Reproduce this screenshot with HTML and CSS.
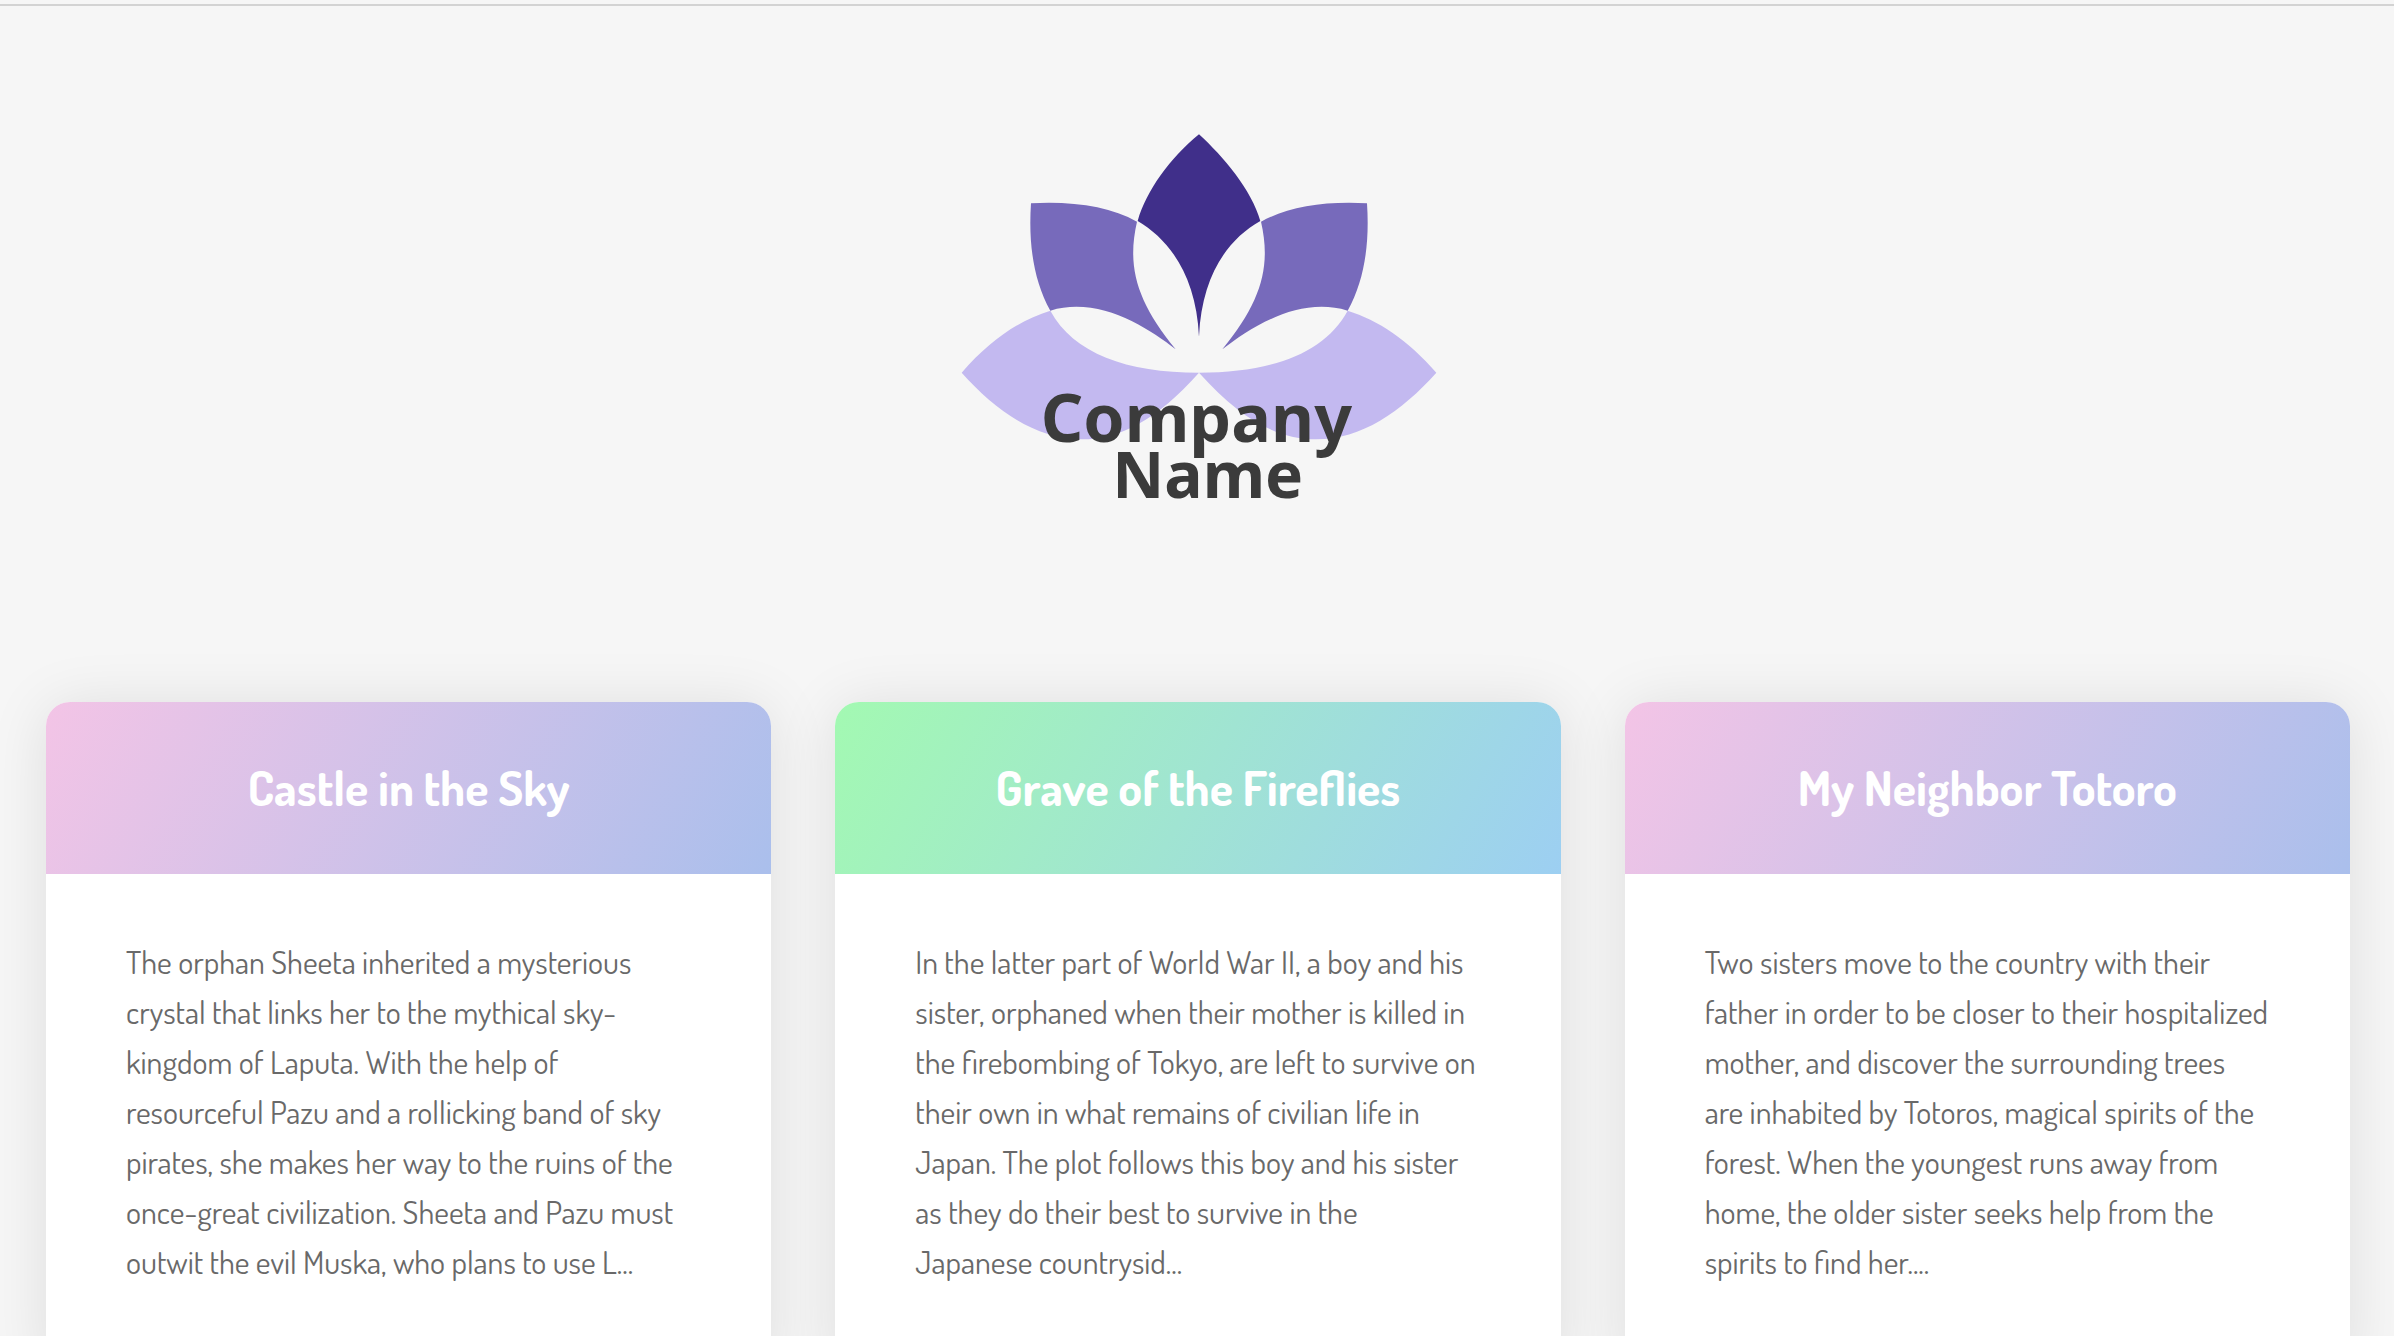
FILE: index.html
```html
<!DOCTYPE html>
<html lang="en">
<head>
<meta charset="utf-8">
<meta name="viewport" content="width=device-width, initial-scale=1">
<title>Ghibli Films</title>
<link rel="stylesheet" href="styles.css">
</head>
<body>
<header class="masthead">
  <svg class="logo" viewBox="-9 0 1560 1230" role="img" aria-label="Company Name">
    <defs>
      <g id="side">
        <path fill="#c3b9f0" d="M65 788C150 690 240 630 331 602C400 730 560 788 777 788C650 930 540 988 425 988C290 988 170 905 65 788Z"/>
        <path fill="#776abb" d="M273 280C400 273 510 290 591 335C560 470 590 575 707 718C620 650 475 558 331 602C280 510 265 400 273 280Z"/>
      </g>
    </defs>
    <use href="#side"/>
    <use href="#side" transform="translate(1554 0) scale(-1 1)"/>
    <path fill="#402f8a" d="M777 73C850 140 935 240 961 333C860 390 785 500 777 680C769 500 690 390 593 333C620 240 690 145 777 73Z"/>
    <text class="logo-text logo-text-large" x="302" y="995">Company</text>
    <text class="logo-text" x="517" y="1165">Name</text>
  </svg>
</header>
<main class="cards">
  <article class="card">
    <h1 class="card-title">Castle in the Sky</h1>
    <p class="card-text">The orphan Sheeta inherited a mysterious crystal that links her to the mythical sky-kingdom of Laputa. With the help of resourceful Pazu and a rollicking band of sky pirates, she makes her way to the ruins of the once-great civilization. Sheeta and Pazu must outwit the evil Muska, who plans to use L...</p>
  </article>
  <article class="card">
    <h1 class="card-title card-title-green">Grave of the Fireflies</h1>
    <p class="card-text">In the latter part of World War II, a boy and his sister, orphaned when their mother is killed in the firebombing of Tokyo, are left to survive on their own in what remains of civilian life in Japan. The plot follows this boy and his sister as they do their best to survive in the Japanese countrysid...</p>
  </article>
  <article class="card">
    <h1 class="card-title">My Neighbor Totoro</h1>
    <p class="card-text">Two sisters move to the country with their father in order to be closer to their hospitalized mother, and discover the surrounding trees are inhabited by Totoros, magical spirits of the forest. When the youngest runs away from home, the older sister seeks help from the spirits to find her....</p>
  </article>
</main>
</body>
</html>
```
FILE: styles.css
```css
* {
  box-sizing: border-box;
}

body {
  margin: 0;
  padding-top: 4px;
  background: #f6f6f6;
  color: #696969;
  font-family: Dosis, Lato, sans-serif;
}

.masthead {
  display: flex;
  justify-content: center;
  padding: 104px 0 182px;
  border-top: 2px solid #d3d3d3;
}

.logo {
  width: 520px;
  height: 410px;
}

.logo-text {
  fill: #3b3b3b;
  font: bold 192px "Noto Sans", sans-serif;
}

.logo-text-large {
  font-size: 199px;
}

.cards {
  display: grid;
  grid-template-columns: repeat(3, 1fr);
  gap: 64px;
  padding: 0 44px 0 46px;
}

.card {
  overflow: hidden;
  border-radius: 24px 24px 0 0;
  background: #fff;
  box-shadow: 0 4px 60px rgba(0, 0, 0, 0.1);
}

.card-title {
  margin: 0;
  padding: 47px 32px 49px;
  background: linear-gradient(120deg, #f3c4e6, #aabfec);
  color: #fff;
  font-size: 48px;
  line-height: 76px;
  text-align: center;
}

.card-title-green {
  background: linear-gradient(120deg, #a3f9b2, #9dcff2);
}

.card-text {
  margin: 0;
  padding: 63px 80px 80px;
  font-size: 32px;
  font-weight: 400;
  line-height: 50px;
}
```
